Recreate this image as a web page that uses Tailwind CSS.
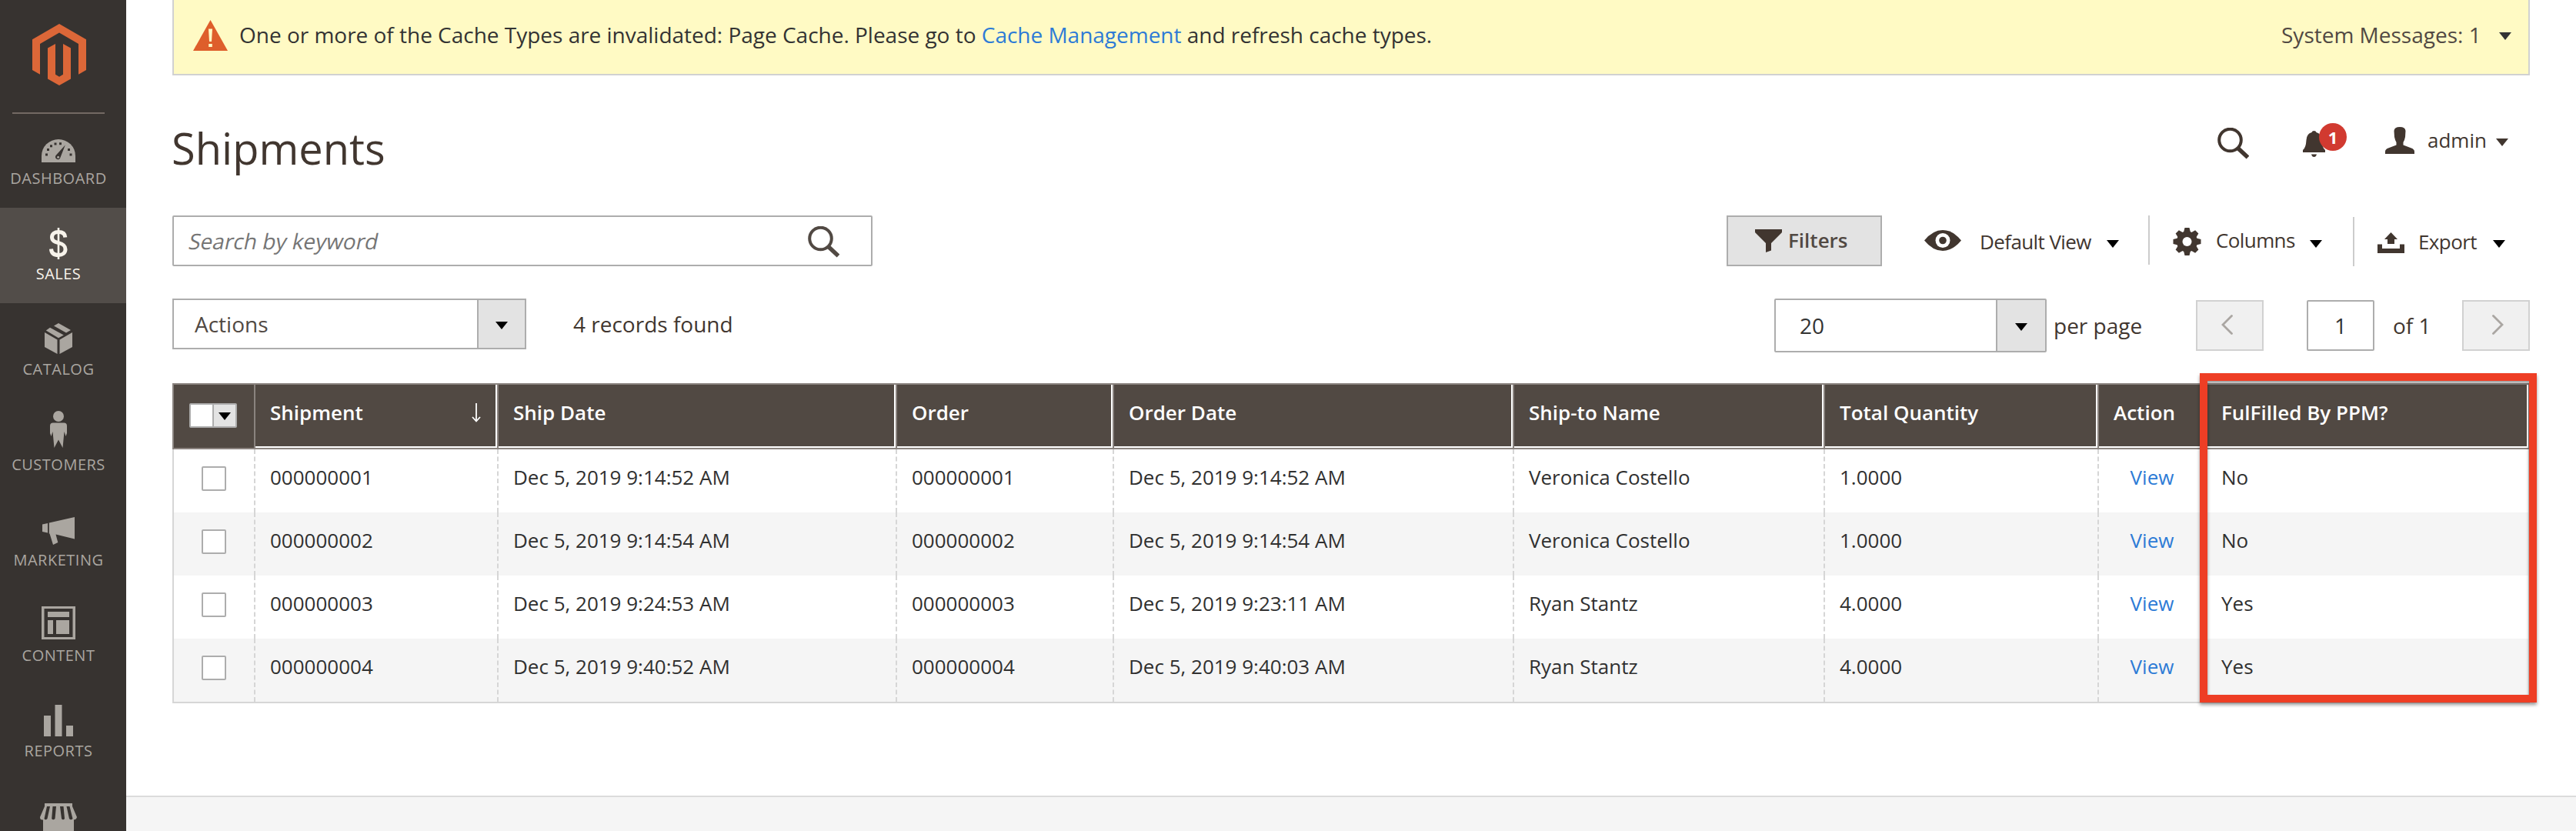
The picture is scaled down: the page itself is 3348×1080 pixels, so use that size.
<!DOCTYPE html>
<html lang="en">
<head>
<meta charset="utf-8">
<title>Shipments</title>
<script src="https://cdn.jsdelivr.net/npm/@tailwindcss/browser@4"></script>
</head>
<body class="flex h-[1080px] w-[3348px] overflow-hidden bg-white font-['Open_Sans',sans-serif] text-[28px] text-[#41362f]">

<!-- Side navigation -->
<aside class="flex h-[1080px] w-[164px] shrink-0 flex-col overflow-hidden bg-[#373330] text-[20px] tracking-[0.5px] text-[#aaa6a0]">
  <div class="flex h-[146px] w-[152px] shrink-0 justify-center pt-[31px] pl-[2px]">
    <svg class="h-[80px] w-[70px]" viewBox="0 0 70 80" fill="#dc6738"><path d="M35 0L70 20.3V60L60 65.8V25.9L35 11.5L10 25.9V65.8L0 60V20.3z"/><path d="M20 31.5L30 26V65.8L35 68.7L40 65.8V26L50 31.5V71.4L35 80L20 71.4z"/></svg>
  </div>
  <div class="ml-4 h-[2px] w-[120px] shrink-0 bg-[#736963]"></div>
  <nav class="flex shrink-0 flex-col">
    <a class="flex h-[122px] flex-col items-center pr-[12px] pt-[33px]">
      <svg class="h-[30px] w-[44px]" viewBox="0 0 44 30"><path d="M0 30V21.500A22 21.500 0 0 1 44 21.500V30z" fill="#aaa6a0"/><path d="M30.800 7.500L24.500 23.500A3.300 3.300 0 1 1 19 20.500z" fill="#373330"/><circle cx="21.600" cy="23.200" r="1.500" fill="#aaa6a0"/><g fill="#373330"><rect x="5" y="18.500" width="3" height="3"/><rect x="7" y="12" width="3" height="3"/><rect x="11" y="7.300" width="3" height="3"/><rect x="16.500" y="4.500" width="3" height="3"/><rect x="23" y="4.200" width="3" height="3"/><rect x="34" y="12" width="3" height="3"/><rect x="36.500" y="18.500" width="3" height="3"/></g></svg>
      <span class="mt-[7px] leading-[28px]">DASHBOARD</span>
    </a>
    <a class="flex h-[124px] flex-col items-center bg-[#524d49] pr-[12px] pt-[26px] text-[#f7f3eb]">
      <svg class="h-[41px] w-[24px]" viewBox="0 0 24 41" fill="none" stroke="#f7f3eb"><path d="M20.800 12.500C20.500 7.500 17 5.500 12 5.500C7 5.500 3.500 8 3.500 12.300C3.500 17 7 18.300 12 19.600C17.500 21 21 22.800 21 28C21 33 17 35.500 12 35.500C6.500 35.500 2.800 33 2.500 27.500" stroke-width="5"/><path d="M12 0V41" stroke-width="2.600"/></svg>
      <span class="mt-[5px] leading-[28px]">SALES</span>
    </a>
    <a class="flex h-[124px] flex-col items-center pr-[12px] pt-[26px]">
      <svg class="h-[40px] w-[36px]" viewBox="0 0 36 40" fill="#aaa6a0"><path d="M0 12L16.500 21.500V40L0 31z"/><path d="M36 12L19.500 21.500V40L36 31z"/><path d="M1.800 9.500L7 5.800L24.800 15.500L18 19.300z"/><path d="M12 3.600L18 0L34 9L28 12.500z"/></svg>
      <span class="mt-[6px] leading-[28px]">CATALOG</span>
    </a>
    <a class="flex h-[124px] flex-col items-center pr-[12px] pt-[16px]">
      <svg class="h-[48px] w-[22px]" viewBox="0 0 22 48" fill="#aaa6a0"><circle cx="11" cy="7" r="7"/><path d="M4 15.500H18Q22 15.500 22 19.500V29L20.500 33L18.500 27L16.500 48L11 37.500L5.500 48L3.500 27L1.500 33L0 29V19.500Q0 15.500 4 15.500z"/></svg>
      <span class="mt-[8px] leading-[28px]">CUSTOMERS</span>
    </a>
    <a class="flex h-[124px] flex-col items-center pr-[12px] pt-[30px]">
      <svg class="h-[36px] w-[42px]" viewBox="0 0 42 36" fill="#aaa6a0"><path d="M0 9.500L7 8V20.500L0 19z"/><path d="M8.800 7.500L42 0V28.500L17.500 22.500L20.300 33L14 36L9.500 21.500H8.800z"/></svg>
      <span class="mt-[6px] leading-[28px]">MARKETING</span>
    </a>
    <a class="flex h-[124px] flex-col items-center pr-[12px] pt-[22px]">
      <svg class="h-[43px] w-[44px]" viewBox="0 0 44 43" fill="#aaa6a0"><path fill-rule="evenodd" d="M0 0H44V43H0zM3.500 3V40H40.500V3z"/><path d="M8 7H36V14H8zM8 18H15V36H8zM19 18H36V36H19z"/></svg>
      <span class="mt-[7px] leading-[28px]">CONTENT</span>
    </a>
    <a class="flex h-[124px] flex-col items-center pr-[12px] pt-[26px]">
      <svg class="h-[41px] w-[38px]" viewBox="0 0 38 41" fill="#aaa6a0"><path d="M0 14H9V41H0zM14.500 0H23.500V41H14.500zM29 27H38V41H29z"/></svg>
      <span class="mt-[5px] leading-[28px]">REPORTS</span>
    </a>
    <a class="flex h-[124px] flex-col items-center pr-[12px] pt-[30px]">
      <svg class="h-[44px] w-[48px]" viewBox="0 0 48 44"><path d="M6 0H42V4L48 18Q47 22 42 21.500H44V44H4V21.500Q0 22 0 18L6 4z" fill="#aaa6a0"/><path d="M9 4H13L9.500 20Q7 22.500 5.500 20zM16.500 4H21L19.500 20Q17 22.500 15.200 20zM26 4H30.500L32 20Q30 22.500 28 20zM34.500 4H38.500L42.500 20Q40 22.500 38 20z" fill="#373330"/></svg>
    </a>
  </nav>
</aside>

<div class="flex h-[1080px] w-[3184px] flex-col">
  <div class="flex h-[1034px] shrink-0 flex-col px-[60px]">

    <!-- System message -->
    <div class="flex h-[98px] shrink-0 items-center border-x-2 border-b-2 border-[#d1d1d1] bg-[#fffac4] pr-[22px] pb-[6px] pl-[25px] text-[#333]">
      <svg class="mt-[1px] h-[40px] w-[45px]" viewBox="0 0 45 40"><path d="M22.500 0L45 40H0z" fill="#de5e2b"/><path d="M20 11.500H25L24 28H21zM20.200 31H24.800V35H20.200z" fill="#fffac4"/></svg>
      <p class="ml-[15px] tracking-[-0.015px] whitespace-nowrap">One or more of the Cache Types are invalidated: Page Cache. Please go to <a class="text-[#2d7bd6]">Cache Management</a> and refresh cache types.</p>
      <span class="ml-auto w-[283px] whitespace-nowrap text-[#514943]">System Messages: 1</span>
      <svg class="mt-[3px] h-[10px] w-[16px]" viewBox="0 0 16 10" fill="#333"><path d="M0 0H16L8 10z"/></svg>
    </div>

    <!-- Page header -->
    <header class="flex h-[182px] shrink-0 items-start">
      <h1 class="mt-[54px] ml-[-1px] text-[56px] leading-[80px]">Shipments</h1>
      <div class="ml-auto flex w-[406px] items-start">
        <svg class="mt-[68px] h-[41px] w-[41px]" viewBox="0 0 41 41" fill="none" stroke="#41362f"><circle cx="16.500" cy="16" r="14.300" stroke-width="4"/><path d="M26.500 26.500L39.500 38.500" stroke-width="5.500"/></svg>
        <div class="relative mt-[62px] ml-[70px] h-[46px] w-[57px]">
          <svg class="mt-[10px] h-[34px] w-[29px]" viewBox="0 0 29 34" fill="#41362f"><path d="M14.500 0Q17 0 17.500 2Q24 3.500 24.500 12Q25 22 29 25V28H0V25Q4 22 4.500 12Q5 3.500 11.500 2Q12 0 14.500 0z"/><path d="M11 30.500H18Q17 34 14.500 34Q12 34 11 30.500z"/></svg>
          <span class="absolute top-0 left-[21px] h-[36px] w-[36px] rounded-full bg-[#d13a30] text-center text-[22px] leading-[36px] font-bold text-white">1</span>
        </div>
        <svg class="mt-[67px] ml-[50px] h-[35px] w-[38px]" viewBox="0 0 38 35" fill="#41362f"><path d="M11.500 5Q12 0 19 0Q26 0 26.500 5L26 13Q25 18 23.500 20V23.500L34 27.500Q38 29 38 32V35H0V32Q0 29 4 27.500L14.500 23.500V20Q13 18 12 13z"/></svg>
        <span class="ml-[17px] w-[89px] pt-[52px] text-[26px] leading-[64px]">admin</span>
        <svg class="mt-[82px] h-[10px] w-[16px]" viewBox="0 0 16 10" fill="#41362f"><path d="M0 0H16L8 10z"/></svg>
      </div>
    </header>

    <!-- Search and grid controls -->
    <div class="flex h-[66px] shrink-0 items-start">
      <div class="flex h-[66px] w-[910px] items-start rounded-[2px] border-2 border-[#adadad] pl-[20px]">
        <span class="w-[804px] -skew-x-12 leading-[63px] text-[#757575]">Search by keyword</span>
        <svg class="mt-[12px] h-[41px] w-[41px]" viewBox="0 0 41 41" fill="none" stroke="#514943"><circle cx="16.500" cy="16" r="14.300" stroke-width="4"/><path d="M26.500 26.500L39.500 38.500" stroke-width="5.500"/></svg>
      </div>
      <div class="ml-auto flex w-[1044px] items-start text-[26px]">
        <button class="flex h-[66px] w-[202px] items-start border-2 border-[#adadad] bg-[#e3e3e3] pl-[35px] text-[#514943]">
          <svg class="mt-[16px] h-[30px] w-[35px]" viewBox="0 0 35 30" fill="#41362f"><path d="M0 0H35V4L21 18V27.500L14 30V18L0 4z"/></svg>
          <span class="ml-[8px] leading-[60px] font-semibold">Filters</span>
        </button>
        <div class="flex h-[66px] w-[346px] items-start pl-[55px]">
          <svg class="mt-[19px] h-[27px] w-[48px]" viewBox="0 0 48 27"><path d="M0 13.500Q11 0 24 0Q37 0 48 13.500Q37 27 24 27Q11 27 0 13.500z" fill="#41362f"/><circle cx="24" cy="13.500" r="9.500" fill="#fff"/><circle cx="24" cy="13.500" r="4.800" fill="#41362f"/></svg>
          <span class="ml-[24px] w-[165px] leading-[68px] tracking-[-0.6px]">Default View</span>
          <svg class="mt-[32px] h-[10px] w-[16px]" viewBox="0 0 16 10" fill="#000"><path d="M0 0H16L8 10z"/></svg>
        </div>
        <div class="flex h-[64px] w-[266px] items-start border-l-2 border-[#ccc] pl-[30px]">
          <svg class="mt-[16px] h-[36px] w-[37px]" viewBox="-18.500 -18 37 36"><g fill="#41362f"><circle r="13.500"/><path id="tooth" d="M-4.500 -12L-3 -18H3L4.500 -12z"/><use href="#tooth" transform="rotate(45)"/><use href="#tooth" transform="rotate(90)"/><use href="#tooth" transform="rotate(135)"/><use href="#tooth" transform="rotate(180)"/><use href="#tooth" transform="rotate(225)"/><use href="#tooth" transform="rotate(270)"/><use href="#tooth" transform="rotate(315)"/></g><circle r="6" fill="#fff"/></svg>
          <span class="ml-[19px] w-[122px] leading-[64px] tracking-[-0.6px]">Columns</span>
          <svg class="mt-[32px] h-[10px] w-[16px]" viewBox="0 0 16 10" fill="#000"><path d="M0 0H16L8 10z"/></svg>
        </div>
        <div class="mt-[2px] flex h-[64px] w-[230px] items-start border-l-2 border-[#ccc] pl-[30px]">
          <svg class="mt-[20px] h-[27px] w-[35px]" viewBox="0 0 35 27" fill="#41362f"><path d="M17.500 0L26 9H22V15H13V9H9z"/><path d="M0 15.500H6V21H29V15.500H35V27H0z"/></svg>
          <span class="ml-[18px] w-[97px] leading-[64px] tracking-[-0.6px]">Export</span>
          <svg class="mt-[30px] h-[10px] w-[16px]" viewBox="0 0 16 10" fill="#000"><path d="M0 0H16L8 10z"/></svg>
        </div>
      </div>
    </div>

    <!-- Mass actions and paging -->
    <div class="mt-[42px] flex h-[70px] shrink-0 items-start">
      <div class="flex h-[66px] w-[460px] border-2 border-[#adadad]">
        <span class="flex-1 pl-[27px] leading-[62px] text-[#514943]">Actions</span>
        <span class="flex w-[62px] justify-center border-l-2 border-[#adadad] bg-[#e3e3e3] pt-[28px]"><svg class="h-[10px] w-[16px]" viewBox="0 0 16 10" fill="#000"><path d="M0 0H16L8 10z"/></svg></span>
      </div>
      <span class="ml-[61px] leading-[66px]">4 records found</span>
      <div class="ml-auto flex w-[982px] items-start">
        <div class="flex h-[70px] w-[354px] rounded-[2px] border-2 border-[#adadad]">
          <span class="flex-1 pl-[31px] leading-[66px] text-[#333]">20</span>
          <span class="flex w-[64px] justify-center border-l-2 border-[#adadad] bg-[#e3e3e3] pt-[30px]"><svg class="h-[10px] w-[16px]" viewBox="0 0 16 10" fill="#000"><path d="M0 0H16L8 10z"/></svg></span>
        </div>
        <span class="ml-[9px] w-[185px] leading-[70px]">per page</span>
        <span class="mt-[2px] flex h-[66px] w-[88px] border-2 border-[#d1d1d1] bg-[#f0f0f0] pt-[17px] pl-[31px]"><svg class="h-[26px] w-[15px]" viewBox="0 0 15 26" fill="none" stroke="#aaa6a2" stroke-width="2.800" stroke-linecap="round"><path d="M13.500 1.500L2 13L13.500 24.500"/></svg></span>
        <span class="mt-[2px] ml-[56px] h-[66px] w-[88px] rounded-[2px] border-2 border-[#adadad] text-center leading-[62px] text-[#333]">1</span>
        <span class="ml-[24px] w-[90px] leading-[70px]">of 1</span>
        <span class="mt-[2px] flex h-[66px] w-[88px] border-2 border-[#d1d1d1] bg-[#f0f0f0] pt-[17px] pl-[37px]"><svg class="h-[26px] w-[15px]" viewBox="0 0 15 26" fill="none" stroke="#aaa6a2" stroke-width="2.800" stroke-linecap="round"><path d="M1.500 1.500L13 13L1.500 24.500"/></svg></span>
      </div>
    </div>

    <!-- Shipments grid -->
    <div class="relative mt-[40px] h-[416px] w-[3064px] shrink-0 text-[26px] text-[#303030]">
      <div class="grid h-[86px] grid-cols-[106px_316px_518px_282px_520px_404px_356px_140px_422px] border-y-2 border-[#8a837f] bg-[#514943] leading-[73px] font-semibold text-white *:border-[#8a837f]">
        <div class="border-l-2 pt-[24px] pl-[20px]">
          <div class="flex h-[32px] w-[62px] rounded-[2px] border-2 border-[#adadad] bg-white">
            <span class="ml-auto flex w-[30px] justify-center border-l-2 border-[#adadad] bg-[#e3e3e3] pt-[10px]"><svg class="h-[10px] w-[16px] shrink-0" viewBox="0 0 16 10" fill="#000"><path d="M0 0H16L8 10z"/></svg></span>
          </div>
        </div>
        <div class="border-l-2"><div class="flex h-[82px] border-r-2 border-b-2 border-white pl-[19px]">Shipment<svg class="mt-[24px] mr-[19px] ml-auto h-[25px] w-[12px]" viewBox="0 0 12 25" fill="none" stroke="#fff" stroke-width="1.800"><path d="M6 0V22"/><path d="M1 18L6 23.500L11 18"/></svg></div></div>
        <div class="border-l-2"><div class="h-[82px] border-r-2 border-b-2 border-white pl-[19px]">Ship Date</div></div>
        <div class="border-l-2"><div class="h-[82px] border-r-2 border-b-2 border-white pl-[19px]">Order</div></div>
        <div class="border-l-2"><div class="h-[82px] border-r-2 border-b-2 border-white pl-[19px]">Order Date</div></div>
        <div class="border-l-2"><div class="h-[82px] border-r-2 border-b-2 border-white pl-[19px]">Ship-to Name</div></div>
        <div class="border-l-2"><div class="h-[82px] border-r-2 border-b-2 border-white pl-[19px]">Total Quantity</div></div>
        <div class="border-l-2"><div class="h-[82px] border-r-2 border-b-2 border-white pl-[19px]">Action</div></div>
        <div class="border-x-2"><div class="h-[82px] border-r-2 border-b-2 border-white pl-[19px]">FulFilled By PPM?</div></div>
      </div>
      <div class="border-x-2 border-b-2 border-[#d6d6d6] leading-[72px]">
        <div class="grid h-[82px] grid-cols-[104px_316px_518px_282px_520px_404px_356px_140px_420px] *:border-[#d6d6d6]">
          <div class="pt-[22px] pl-[36px]"><div class="size-[32px] rounded-[2px] border-2 border-[#adadad] bg-white"></div></div>
          <div class="border-l-2 border-dashed pl-[19px]">000000001</div>
          <div class="border-l-2 border-dashed pl-[19px]">Dec 5, 2019 9:14:52 AM</div>
          <div class="border-l-2 border-dashed pl-[19px]">000000001</div>
          <div class="border-l-2 border-dashed pl-[19px]">Dec 5, 2019 9:14:52 AM</div>
          <div class="border-l-2 border-dashed pl-[19px]">Veronica Costello</div>
          <div class="border-l-2 border-dashed pl-[19px]">1.0000</div>
          <div class="border-l-2 border-dashed text-center text-[#2d7bd6]">View</div>
          <div class="border-l-2 border-dashed pl-[19px]">No</div>
        </div>
        <div class="grid h-[82px] grid-cols-[104px_316px_518px_282px_520px_404px_356px_140px_420px] bg-[#f5f5f5] *:border-[#d6d6d6]">
          <div class="pt-[22px] pl-[36px]"><div class="size-[32px] rounded-[2px] border-2 border-[#adadad] bg-white"></div></div>
          <div class="border-l-2 border-dashed pl-[19px]">000000002</div>
          <div class="border-l-2 border-dashed pl-[19px]">Dec 5, 2019 9:14:54 AM</div>
          <div class="border-l-2 border-dashed pl-[19px]">000000002</div>
          <div class="border-l-2 border-dashed pl-[19px]">Dec 5, 2019 9:14:54 AM</div>
          <div class="border-l-2 border-dashed pl-[19px]">Veronica Costello</div>
          <div class="border-l-2 border-dashed pl-[19px]">1.0000</div>
          <div class="border-l-2 border-dashed text-center text-[#2d7bd6]">View</div>
          <div class="border-l-2 border-dashed pl-[19px]">No</div>
        </div>
        <div class="grid h-[82px] grid-cols-[104px_316px_518px_282px_520px_404px_356px_140px_420px] *:border-[#d6d6d6]">
          <div class="pt-[22px] pl-[36px]"><div class="size-[32px] rounded-[2px] border-2 border-[#adadad] bg-white"></div></div>
          <div class="border-l-2 border-dashed pl-[19px]">000000003</div>
          <div class="border-l-2 border-dashed pl-[19px]">Dec 5, 2019 9:24:53 AM</div>
          <div class="border-l-2 border-dashed pl-[19px]">000000003</div>
          <div class="border-l-2 border-dashed pl-[19px]">Dec 5, 2019 9:23:11 AM</div>
          <div class="border-l-2 border-dashed pl-[19px]">Ryan Stantz</div>
          <div class="border-l-2 border-dashed pl-[19px]">4.0000</div>
          <div class="border-l-2 border-dashed text-center text-[#2d7bd6]">View</div>
          <div class="border-l-2 border-dashed pl-[19px]">Yes</div>
        </div>
        <div class="grid h-[82px] grid-cols-[104px_316px_518px_282px_520px_404px_356px_140px_420px] bg-[#f5f5f5] *:border-[#d6d6d6]">
          <div class="pt-[22px] pl-[36px]"><div class="size-[32px] rounded-[2px] border-2 border-[#adadad] bg-white"></div></div>
          <div class="border-l-2 border-dashed pl-[19px]">000000004</div>
          <div class="border-l-2 border-dashed pl-[19px]">Dec 5, 2019 9:40:52 AM</div>
          <div class="border-l-2 border-dashed pl-[19px]">000000004</div>
          <div class="border-l-2 border-dashed pl-[19px]">Dec 5, 2019 9:40:03 AM</div>
          <div class="border-l-2 border-dashed pl-[19px]">Ryan Stantz</div>
          <div class="border-l-2 border-dashed pl-[19px]">4.0000</div>
          <div class="border-l-2 border-dashed text-center text-[#2d7bd6]">View</div>
          <div class="border-l-2 border-dashed pl-[19px]">Yes</div>
        </div>
      </div>
      <!-- Highlight around the last column -->
      <div class="absolute top-[-13px] left-[2635px] h-[428px] w-[438px] border-[10px] border-[#ee3e25] drop-shadow-[0_3px_2px_rgba(0,0,0,0.4)]"></div>
    </div>
  </div>
  <footer class="h-[46px] shrink-0 border-t-2 border-[#dcdcdc] bg-[#f5f5f5]"></footer>
</div>
</body>
</html>
